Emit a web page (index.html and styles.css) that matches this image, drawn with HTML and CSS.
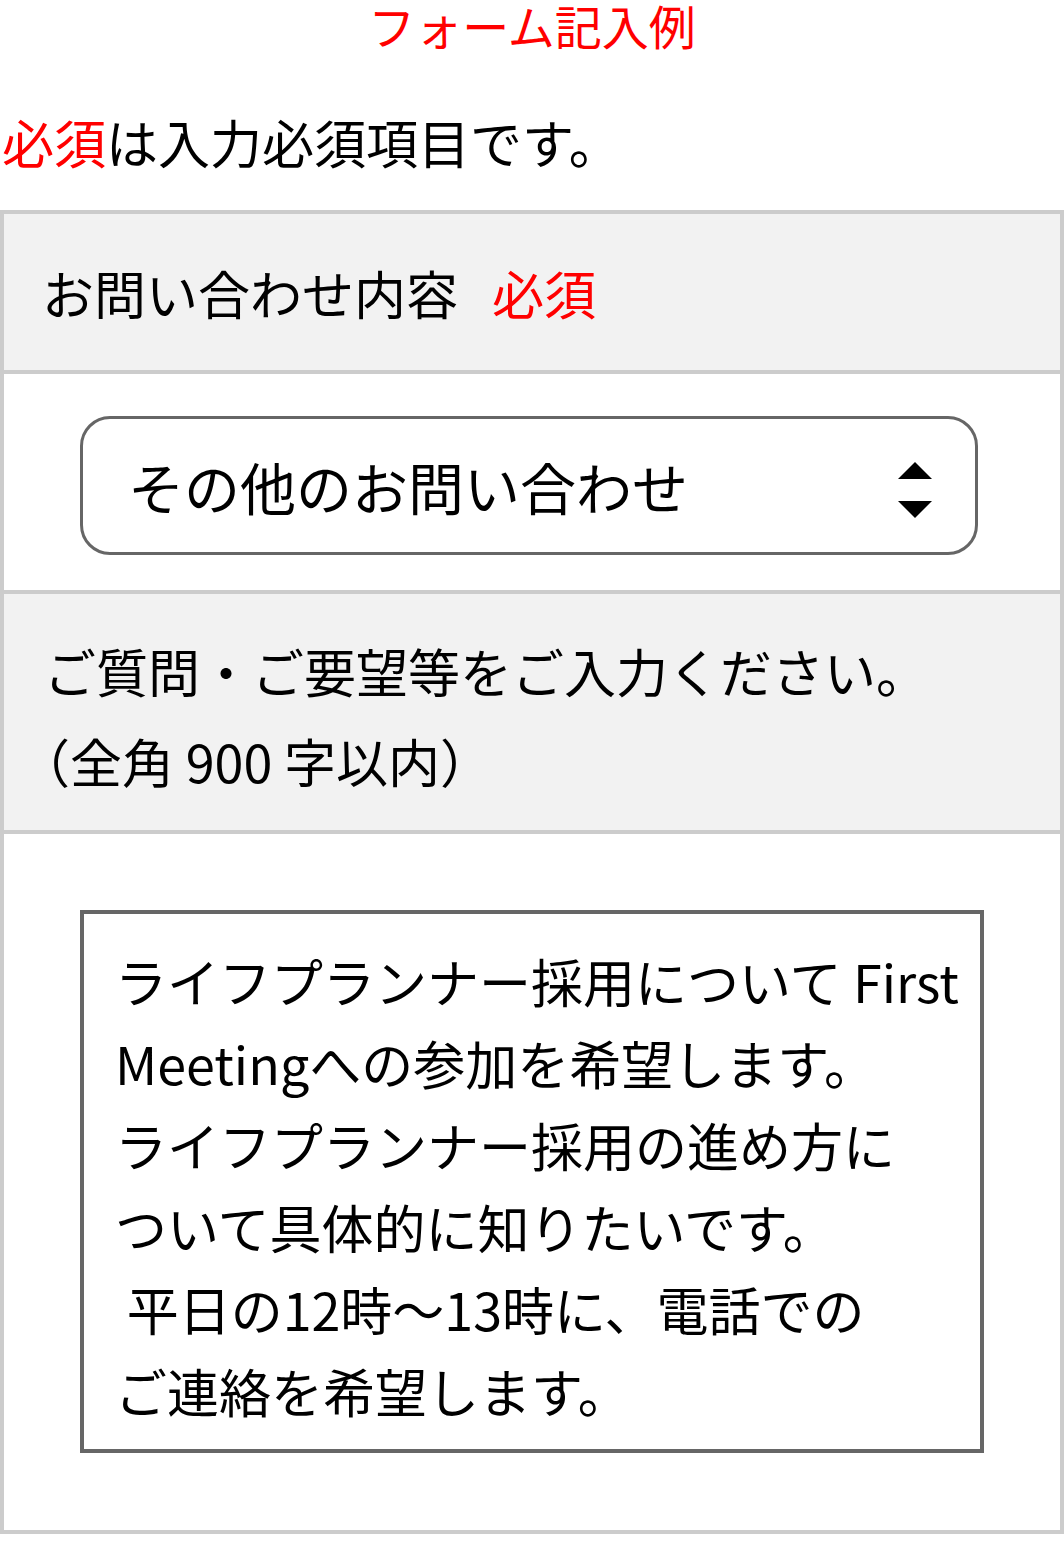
FILE: index.html
```html
<!DOCTYPE html>
<html lang="ja">
<head>
  <meta charset="UTF-8">
  <meta name="viewport" content="width=device-width, initial-scale=1.0">
  <title>フォーム記入例</title>
  <link rel="stylesheet" href="styles.css">
</head>
<body>
  <h1 class="form-title">フォーム記入例</h1>

  <p class="form-note"><span class="required">必須</span>は入力必須項目です。</p>

  <div class="form-table">
    <div class="form-head">
      <span>お問い合わせ内容</span>
      <span class="required label-required">必須</span>
    </div>
    <div class="form-body select-row">
      <div class="select-wrap">
        <select class="form-select">
          <option selected>その他のお問い合わせ</option>
          <option>資料請求</option>
          <option>採用について</option>
        </select>
        <svg class="select-arrows" width="34" height="56" viewBox="0 0 34 56" aria-hidden="true">
          <polygon points="17,0 34,17 0,17" fill="#000"/>
          <polygon points="0,39 34,39 17,56" fill="#000"/>
        </svg>
      </div>
    </div>
    <div class="form-head text-head">
      <div>ご質問・ご要望等をご入力ください。</div>
      <div><span class="paren-open">（</span>全角 900 字以内）</div>
    </div>
    <div class="form-body textarea-row">
      <textarea class="form-textarea" wrap="off" readonly>ライフプランナー採用について First
Meetingへの参加を希望します。
ライフプランナー採用の進め方に
ついて具体的に知りたいです。
 平日の12時～13時に、電話での
ご連絡を希望します。</textarea>
    </div>
  </div>
</body>
</html>
```

FILE: styles.css
```css
* {
  margin: 0;
  padding: 0;
  box-sizing: border-box;
}

body {
  font-family: "Noto Sans CJK JP", "Noto Sans", sans-serif;
  color: #000;
  background: #fff;
}

.required {
  color: #f00;
}

.form-title {
  font-size: 47px;
  font-weight: normal;
  line-height: 50px;
  color: #f00;
  text-align: center;
}

.form-note {
  font-size: 52px;
  line-height: 76px;
  margin-top: 54px;
  padding-left: 2px;
}

.form-table {
  margin-top: 30px;
  border: 4px solid #ccc;
}

.form-head {
  background: #f2f2f2;
  border-bottom: 4px solid #ccc;
  height: 160px;
  padding-left: 38px;
  display: flex;
  align-items: center;
  font-size: 52px;
}

.label-required {
  margin-left: 34px;
}

.form-body {
  background: #fff;
  border-bottom: 4px solid #ccc;
}

.form-body:last-child {
  border-bottom: none;
}

.select-row {
  padding: 42px 82px 35px 76px;
}

.select-wrap {
  position: relative;
}

.form-select {
  appearance: none;
  -webkit-appearance: none;
  display: block;
  width: 100%;
  height: 139px;
  padding: 0 100px 0 45px;
  border: 3px solid #666;
  border-radius: 30px;
  background: #fff;
  color: #000;
  font-family: "Noto Sans CJK JP", "Noto Sans", sans-serif;
  font-size: 56px;
  outline: none;
}

.select-arrows {
  position: absolute;
  right: 46px;
  top: 46px;
  pointer-events: none;
}

.text-head {
  height: 240px;
  display: block;
  padding-top: 32px;
  padding-left: 40px;
  font-size: 52px;
  line-height: 90px;
}

.paren-open {
  font-feature-settings: "halt";
}

.textarea-row {
  padding: 76px 76px 77px;
}

.form-textarea {
  display: block;
  width: 100%;
  height: 543px;
  padding: 26px 20px 10px 31px;
  border: 4px solid #666;
  border-radius: 0;
  font-family: "Noto Sans CJK JP", "Noto Sans", sans-serif;
  font-size: 52px;
  line-height: 82px;
  color: #000;
  background: #fff;
  resize: none;
  overflow: hidden;
  outline: none;
  white-space: pre;
}
```
